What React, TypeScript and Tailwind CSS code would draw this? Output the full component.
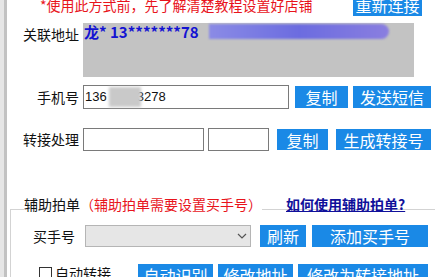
const btn =
  "flex items-center justify-center bg-[#1a89e6] text-[16px] leading-none text-white"

export default function App() {
  return (
    <div className="flex h-[277px] w-[435px] overflow-hidden bg-white font-['Noto_Sans_CJK_SC','Noto_Sans',sans-serif] text-[14px] text-[#111]">
      <div className="w-[4px] bg-[#e6e6e6]" />
      <div className="w-[3px] bg-[#c2c2c2]" />
      <div className="flex flex-1 flex-col">
        {/* top warning + reconnect */}
        <div className="-mt-[6px] flex h-[22px] items-center">
          <span className="ml-[33px] leading-[17px] text-[#e8141c]">*使用此方式前，先了解清楚教程设置好店铺</span>
          <div className={`${btn} ml-auto mr-[13px] h-[22px] w-[69px]`}>重新连接</div>
        </div>

        {/* linked address */}
        <div className="mt-[7px] flex items-start">
          <div className="w-[72px] pt-[3px] text-right leading-[17px]">关联地址</div>
          <div className="ml-[4px] h-[54px] w-[331px] bg-[#c3c3c3]">
            <div className="flex h-[16px] items-center">
              <span className="ml-[1px] text-[15px] font-bold leading-none text-[#1414d2]">龙* 13*******78</span>
              <div className="ml-[10px] h-[15px] w-[180px] rounded-r-full bg-gradient-to-r from-[#8b8be6] via-[#6c6ce0] to-[#8a7ee0] blur-[1px]" />
            </div>
          </div>
        </div>

        {/* phone */}
        <div className="mt-[8px] flex h-[24px] items-center">
          <div className="w-[72px] text-right leading-[17px]">手机号</div>
          <div className="ml-[4px] flex h-[24px] w-[206px] items-center border border-[#7a7a7a] px-[1px] font-['Liberation_Sans',sans-serif] text-[13px]">
            <span>136</span>
            <span className="relative z-10 -mr-[4px] ml-[2px] inline-block h-[20px] w-[32px] bg-[#c9c9c9] blur-[1.5px]" />
            <span>3278</span>
          </div>
          <div className={`${btn} ml-[6px] h-[22px] w-[53px]`}>复制</div>
          <div className={`${btn} ml-[5px] h-[22px] w-[78px]`}>发送短信</div>
        </div>

        {/* transfer */}
        <div className="mt-[19px] flex h-[23px] items-center">
          <div className="w-[72px] text-right leading-[17px]">转接处理</div>
          <div className="ml-[4px] h-[23px] w-[121px] border border-[#7a7a7a]" />
          <div className="ml-[4px] h-[23px] w-[61px] border border-[#7a7a7a]" />
          <div className={`${btn} ml-[8px] h-[21px] w-[51px]`}>复制</div>
          <div className={`${btn} ml-[8px] h-[21px] w-[95px]`}>生成转接号</div>
        </div>

        {/* assist header */}
        <div className="relative z-10 mt-[45px] flex h-[17px] items-center">
          <span className="ml-[17px] bg-white leading-[17px]">
            辅助拍单<span className="text-[#e8141c]">（辅助拍单需要设置买手号）</span>
          </span>
          <a className="ml-[24px] font-bold leading-[15px] text-[#10109a] underline">如何使用辅助拍单?</a>
        </div>

        {/* group box */}
        <div className="-mt-[4px] ml-[3px] flex-1 border-l border-t border-[#d3d3d3] pt-[15px]">
          <div className="flex h-[22px] items-center">
            <div className="ml-[22px] leading-[17px]">买手号</div>
            <div className="ml-[10px] flex h-[22px] w-[166px] items-center justify-end border border-[#b5b5b5] bg-[#e6e6e6] pr-[3px]">
              <svg width="10" height="6" viewBox="0 0 10 6" fill="none" stroke="#555" strokeWidth="1.2">
                <path d="M1 1l4 4 4-4" />
              </svg>
            </div>
            <div className={`${btn} ml-[9px] h-[22px] w-[46px]`}>刷新</div>
            <div className={`${btn} ml-[6px] h-[22px] w-[116px]`}>添加买手号</div>
          </div>
          <div className="mt-[17px] flex items-start">
            <div className="ml-[28px] mt-[3px] h-[13px] w-[13px] border border-[#333] bg-white" />
            <span className="ml-[3px] mt-[1px] leading-[17px]">自动转接</span>
            <div className={`${btn} ml-[27px] h-[22px] w-[75px]`}>自动识别</div>
            <div className={`${btn} ml-[5px] h-[22px] w-[75px]`}>修改地址</div>
            <div className={`${btn} ml-[5px] h-[22px] w-[130px]`}>修改为转接地址</div>
          </div>
        </div>
      </div>
    </div>
  )
}
